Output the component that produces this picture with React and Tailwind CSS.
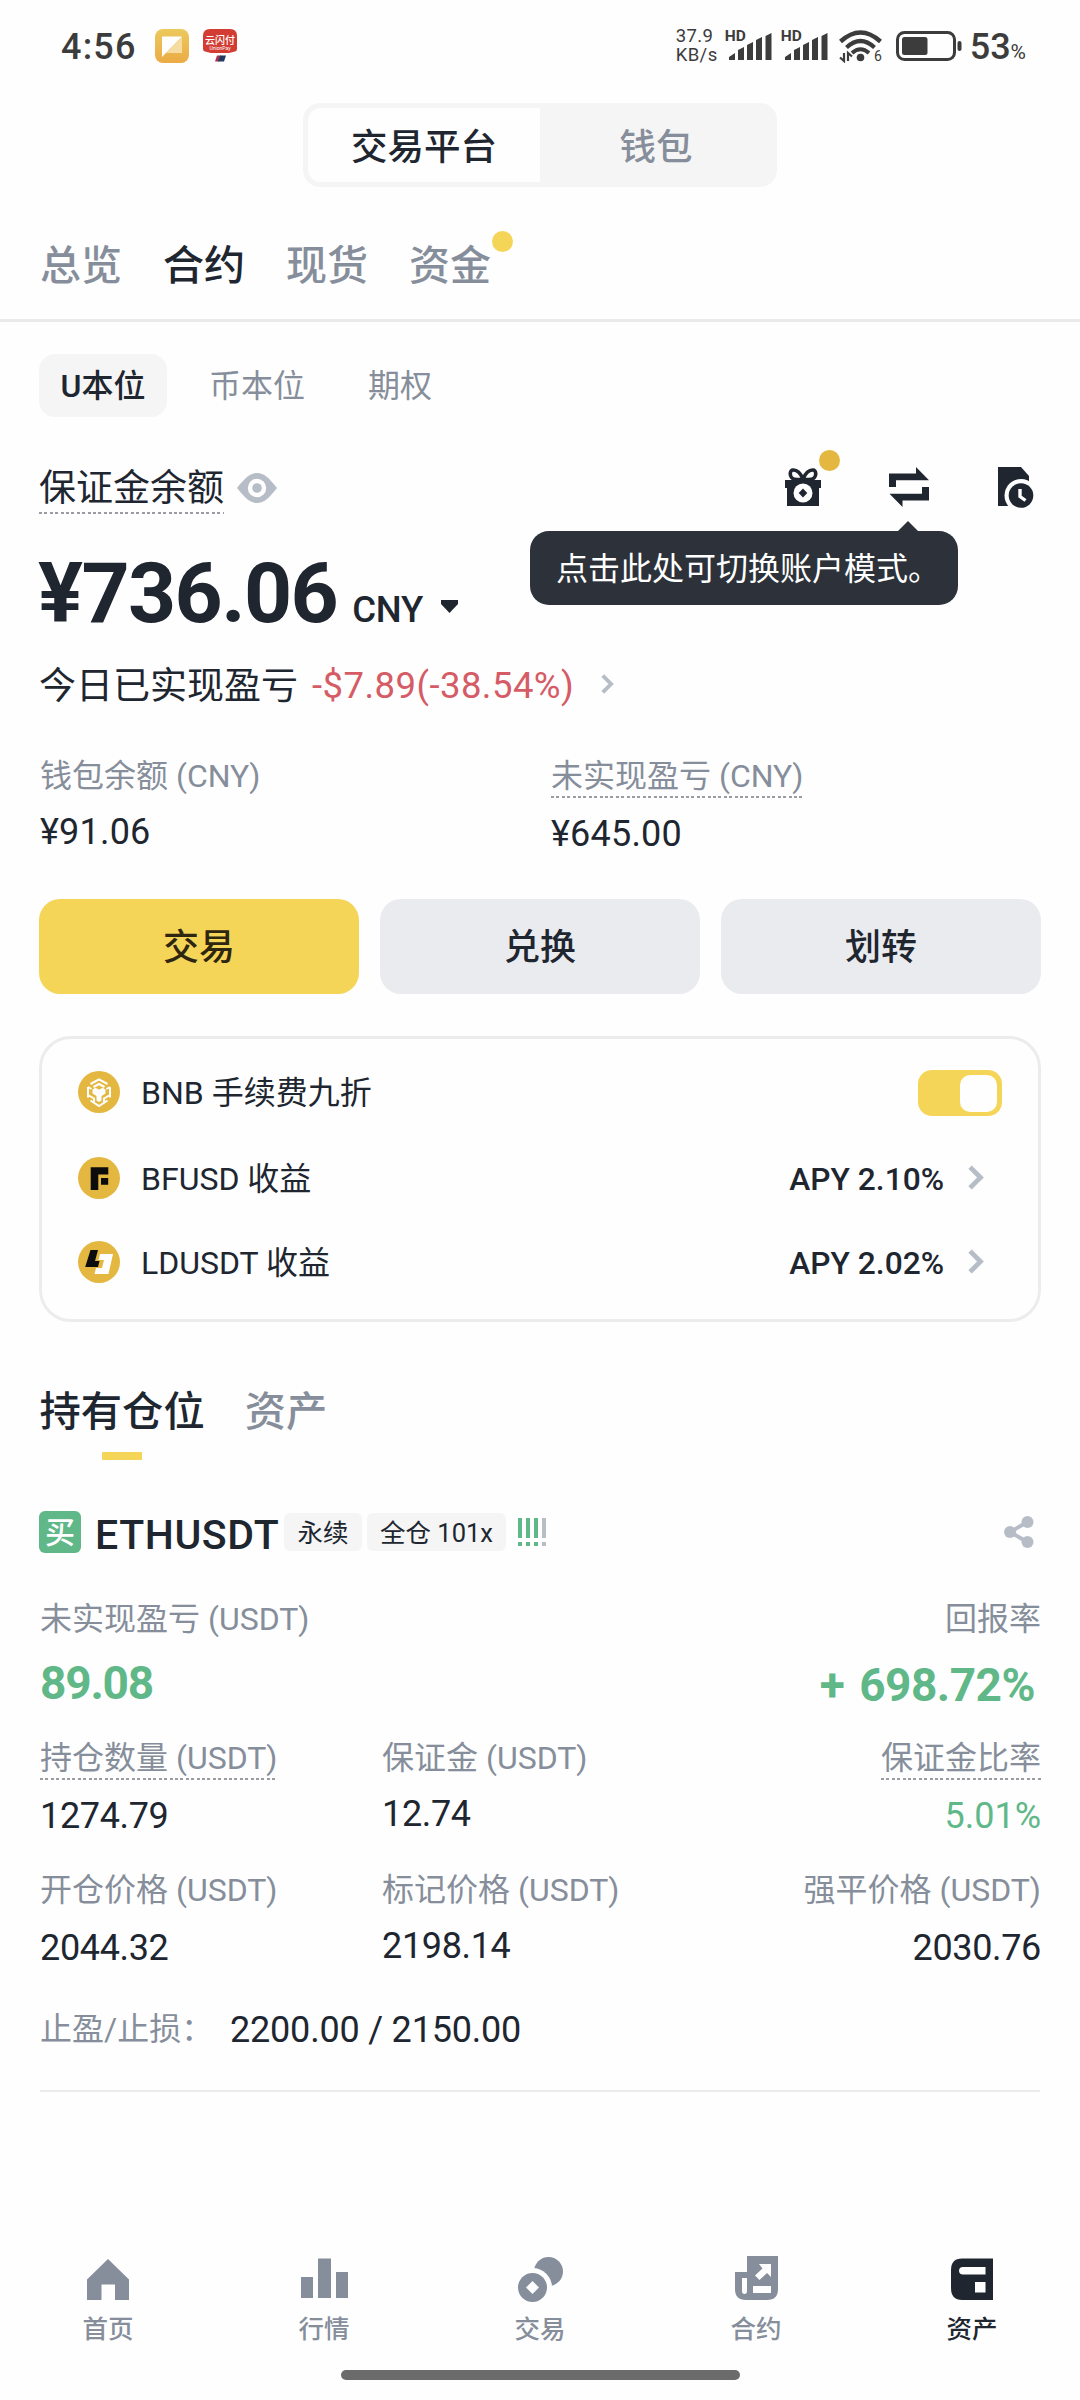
import React, { useState } from 'react';
import clsx from 'clsx';

const stats = [
  [
    { label: '持仓数量 (USDT)', value: '1274.79', dashed: true },
    { label: '保证金 (USDT)', value: '12.74' },
    { label: '保证金比率', value: '5.01%', dashed: true, green: true },
  ],
  [
    { label: '开仓价格 (USDT)', value: '2044.32' },
    { label: '标记价格 (USDT)', value: '2198.14' },
    { label: '强平价格 (USDT)', value: '2030.76' },
  ],
];

function Dashes() {
  return (
    <div className="h-[2px] w-full bg-[repeating-linear-gradient(90deg,#9a9ca1_0_3px,transparent_3px_5.4px)]" />
  );
}

function Chevron({ className }) {
  return (
    <svg className={className} viewBox="0 0 15 24" fill="none" stroke="#b7bdc6" strokeWidth="4.6">
      <path d="M1.8 2 L11.8 12 L1.8 22" />
    </svg>
  );
}

function Signal() {
  return (
    <div className="relative h-[32px] w-[48px]">
      <span className="absolute left-0 top-0 text-[15.5px] leading-[13px] font-bold">HD</span>
      <svg className="absolute left-[4px] top-[3px]" width="43" height="27" viewBox="0 0 43 27" fill="#3c3c3c">
        <path d="M0 27v-3l6-4v7zM9 27V17l6-3v13zM18 27V12l6-3v18zM27 27V7l6-3v23zM36.500 27V3l6-3v27z" />
      </svg>
    </div>
  );
}

function StatusBar() {
  return (
    <div className="flex h-[92px] items-center text-[#3c3c3c]">
      <span className="ml-[61px] w-[94px] pt-[2px] text-[36px] leading-none font-medium tracking-[1.2px]">4:56</span>
      <svg width="34" height="34" viewBox="0 0 34 34">
        <defs>
          <linearGradient id="noteBg" x1="0" y1="0" x2="0" y2="1">
            <stop offset="0" stopColor="#ecc95c" />
            <stop offset="1" stopColor="#ebab45" />
          </linearGradient>
        </defs>
        <rect width="34" height="34" rx="8" fill="url(#noteBg)" />
        <path d="M7 7.500h20L7 28z" fill="#fff" />
        <path d="M27 7.500V24H11z" fill="#f6dca0" />
      </svg>
      <svg className="ml-[14px]" width="34" height="34" viewBox="0 0 34 34">
        <path d="M7 0h20q7 0 7 7v13q0 2-2 2.500L26 24H8l-6-1.500Q0 22 0 20V7Q0 0 7 0z" fill="#d23c33" />
        <text x="17" y="14.500" fontSize="10" fontWeight="500" fill="#fff" textAnchor="middle">云闪付</text>
        <text x="17" y="20.500" fontSize="5" fill="#fff" textAnchor="middle">UnionPay</text>
        <path d="M14 26.500h4l-2 6h-4z" fill="#a8324a" />
        <path d="M17 26.500h6l-2 6h-6z" fill="#1f3a63" />
      </svg>

      <div className="ml-auto w-[45px] text-[18.500px] leading-[19px] tracking-[0.400px]">
        <div>37.9</div>
        <div>KB/s</div>
      </div>
      <div className="ml-[4px]"><Signal /></div>
      <div className="ml-[8px]"><Signal /></div>
      <svg className="ml-[10px]" width="44" height="34" viewBox="0 0 44 34" fill="none" stroke="#3c3c3c">
        <path d="M1.500 12.500Q21.500 -5.500 41.500 12.500" strokeWidth="4.400" />
        <path d="M7.500 18.500Q21.500 5.500 35.500 18.500" strokeWidth="4.200" />
        <path d="M13 24Q21.500 16.500 30 24" strokeWidth="4" />
        <circle cx="21.500" cy="28.500" r="3.800" fill="#3c3c3c" stroke="none" />
        <path d="M5 24v8L1 28.500M9 32v-8l4 3.500" strokeWidth="2.200" />
        <text x="35" y="32" fontSize="14" fill="#3c3c3c" stroke="none">6</text>
      </svg>
      <svg className="ml-[13px]" width="66" height="30" viewBox="0 0 66 30">
        <rect x="1.500" y="1.500" width="57" height="27" rx="7" fill="none" stroke="#3c3c3c" strokeWidth="3" />
        <rect x="6" y="6" width="25.500" height="18" rx="2.500" fill="#3c3c3c" />
        <rect x="61.500" y="10" width="4" height="10" rx="2" fill="#3c3c3c" />
      </svg>
      <div className="mr-[54px] ml-[8px] flex items-baseline pt-[2px] leading-none">
        <span className="text-[36px] font-medium">53</span>
        <span className="text-[21px]">%</span>
      </div>
    </div>
  );
}

function GiftIcon() {
  return (
    <svg width="36" height="38" viewBox="0 0 36 38">
      <g fill="none" stroke="#202630" strokeWidth="3.600">
        <path d="M18 11C15 4 11 1.800 8 2S4.500 7 6.500 9.500 13 12 18 11z" />
        <path d="M18 11C21 4 25 1.800 28 2S31.500 7 29.500 9.500 23 12 18 11z" />
      </g>
      <path d="M0 12h36v8h-2v18H2V20H0z" fill="#202630" />
      <circle cx="18" cy="25" r="9.500" fill="#fff" />
      <path d="M18 20.500L22.300 25 18 29.500 13.700 25z" fill="#202630" />
    </svg>
  );
}

function SwapIcon() {
  return (
    <svg width="40" height="40" viewBox="0 0 40 40" fill="#202630">
      <path d="M0 6.500h27V0l13 13.300H7V20H0z" />
      <path d="M40 33.500H13.500V40L.5 26.700H33V20h7z" />
    </svg>
  );
}

function HistoryIcon() {
  return (
    <svg className="-translate-y-px" width="36" height="41" viewBox="0 0 36 41">
      <path d="M0 0h23l8 9v30H0z" fill="#202630" />
      <circle cx="23" cy="28.500" r="16.500" fill="#fefefe" />
      <circle cx="23" cy="28.500" r="12.300" fill="#202630" />
      <path d="M22 22v7.500l5.500 4" fill="none" stroke="#fff" strokeWidth="3.400" />
    </svg>
  );
}

function BnbIcon() {
  return (
    <svg width="42" height="42" viewBox="0 0 42 42">
      <circle cx="21" cy="21" r="21" fill="#e4b740" />
      <g fill="none" stroke="#fff" strokeWidth="2">
        <path d="M12.500 13L21 8.300l8.500 4.700M32 16v10.500M29.500 29.500L21 35l-8.500-5.500M10 26.500V16" />
        <path d="M15.500 16L21 13l5.500 3M10 16l3.500 2M32 16l-3.500 2M10 24l6 3.500v3.500M32 24l-6 3.500v3.500" />
      </g>
      <path d="M14.500 18.500l3-1.700 3.500 2 3.500-2 3 1.700v4l-4 2.500v4.500L21 31l-2.500-1.500V25l-4-2.500z" fill="#fff" />
    </svg>
  );
}

function BfusdIcon() {
  return (
    <svg width="42" height="42" viewBox="0 0 42 42">
      <circle cx="21" cy="21" r="21" fill="#e4b740" />
      <path d="M12.700 10.300h17.600v7.200h-10V33h-7.600zM23 21h7.200v6.800H23z" fill="#0c0c0c" />
    </svg>
  );
}

function LdusdtIcon() {
  return (
    <svg width="42" height="42" viewBox="0 0 42 42">
      <circle cx="21" cy="21" r="21" fill="#e4b740" />
      <path d="M12.500 9H20l-3 11h4.500L20 26H7.200z" fill="#0c0c0c" />
      <path d="M22 13h13l-4.500 20H16.500L18 27h6l2-8h-5.500z" fill="#fff" />
    </svg>
  );
}

function EarnRow({ icon, text, children, className }) {
  return (
    <div className={clsx('flex items-center', className)}>
      {icon}
      <span className="ml-[21px] pt-[2px] text-[32px]">{text}</span>
      <div className="ml-auto flex items-center">{children}</div>
    </div>
  );
}

function NavItem({ label, active, children }) {
  return (
    <div className={clsx('flex w-[216px] flex-col items-center', active ? 'text-[#202630]' : 'text-[#868e9b]')}>
      <svg width="48" height="48" viewBox="0 0 48 48" fill="currentColor">{children}</svg>
      <span className="mt-[10px] h-[32px] text-[25.500px] leading-[32px] font-medium">{label}</span>
    </div>
  );
}

export default function App() {
  const [feeDiscount, setFeeDiscount] = useState(true);

  return (
    <div className="h-[2400px] w-[1080px] overflow-hidden bg-[#fefefe] font-[Roboto,'Noto_Sans_CJK_SC',sans-serif] text-[#202630]">
      <StatusBar />

      {/* Platform / wallet switch */}
      <div className="mx-auto mt-[11px] flex h-[84px] w-[474px] rounded-[17px] bg-[#f5f5f5] p-[5px] text-[36.500px] font-medium">
        <div className="flex w-[232px] items-center justify-center rounded-l-[13px] bg-[#fefefe] pt-[7px]">交易平台</div>
        <div className="flex flex-1 items-center justify-center pt-[7px] text-[#868e9b]">钱包</div>
      </div>

      {/* Account tabs */}
      <div className="flex h-[135px] gap-[41px] border-b-[3px] border-[#eaeaea] pt-[58px] pl-[40px] text-[41px] leading-[42px] font-medium text-[#868e9b]">
        <span>总览</span>
        <span className="text-[#202630]">合约</span>
        <span>现货</span>
        <span className="relative h-[42px]">
          资金
          <i className="absolute -top-[14px] left-[83px] size-[21px] rounded-full bg-[#f5d558]" />
        </span>
      </div>

      <div className="mt-[32px] ml-[39px] flex h-[63px] gap-[21px] text-[32px] leading-[65px] text-[#868e9b]">
        <span className="h-[63px] w-[128px] rounded-[16px] bg-[#f5f5f5] text-center font-medium text-[#202630]">U本位</span>
        <span className="px-[21px]">币本位</span>
        <span className="px-[21px]">期权</span>
      </div>

      {/* Margin balance */}
      <div className="mt-[46px] flex h-[51px] items-center pr-[46px] pl-[39px]">
        <div className="pt-[3px] text-[37px] leading-[46px]">
          保证金余额
          <Dashes />
        </div>
        <svg className="ml-[13px] -translate-y-px" width="40" height="30" viewBox="0 0 40 30">
          <path d="M0 15C8 5 13 0 20 0s12 5 20 15c-8 10-13 15-20 15S8 25 0 15z" fill="#b7bdc6" />
          <circle cx="20" cy="15" r="9.200" fill="#fefefe" />
          <circle cx="20" cy="15" r="4.800" fill="#b7bdc6" />
        </svg>
        <div className="relative mr-[68px] ml-auto -translate-y-[2px]">
          <GiftIcon />
          <i className="absolute -top-[18px] left-[34px] size-[21px] rounded-full bg-[#e4b740]" />
        </div>
        <div className="relative mr-[69px] -translate-y-[2px]">
          <SwapIcon />
          <div className="absolute top-[64px] -left-[359px] flex h-[74px] w-[428px] items-center rounded-[19px] bg-[#2d323a] pt-[2px] pl-[26px] text-[32px] whitespace-nowrap text-white">
            点击此处可切换账户模式。
            <svg className="absolute -top-[10px] left-[367px]" width="22" height="11" viewBox="0 0 22 11" fill="#2d323a">
              <path d="M11 0l11 11H0z" />
            </svg>
          </div>
        </div>
        <HistoryIcon />
      </div>

      <div className="mt-[40px] flex h-[80px] items-baseline pl-[38px]">
        <span className="text-[84px] leading-[80px] font-bold tracking-[-1.600px]">¥736.06</span>
        <span className="ml-[15px] text-[36.500px] font-medium tracking-[-0.200px]">CNY</span>
        <svg className="ml-[18px] -translate-y-[9px]" width="17" height="13" viewBox="0 0 17 13" fill="#202630">
          <path d="M0 0h17v4L8.500 13 0 4z" />
        </svg>
      </div>

      <div className="mt-[26px] flex h-[50px] items-center pt-[3px] pl-[39px] text-[37px]">
        今日已实现盈亏
        <span className="ml-[14px] text-[36.500px] tracking-[0.450px] text-[#d55c66]">-$7.89(-38.54%)</span>
        <Chevron className="ml-[27px] h-[20px] w-[13px] -translate-y-[3px]" />
      </div>

      <div className="mt-[46px] grid h-[98px] grid-cols-[511px_1fr] pl-[40px] text-[36px] tracking-[0.200px]">
        <div>
          <div className="h-[40px] text-[32px] leading-[40px] tracking-normal text-[#868e9b]">钱包余额 (CNY)</div>
          <div className="mt-[16px] leading-[40px]">¥91.06</div>
        </div>
        <div>
          <div className="w-max text-[32px] leading-[40px] tracking-normal text-[#868e9b]">
            未实现盈亏 (CNY)
            <Dashes />
          </div>
          <div className="mt-[16px] leading-[40px]">¥645.00</div>
        </div>
      </div>

      <div className="mt-[45px] grid h-[95px] grid-cols-3 gap-[21px] px-[39px] text-[36px] font-medium">
        <button className="rounded-[21px] bg-[#f5d558] pt-[3px] text-[#2e2610]">交易</button>
        <button className="rounded-[21px] bg-[#eaebef] pt-[3px]">兑换</button>
        <button className="rounded-[21px] bg-[#eaebef] pt-[3px]">划转</button>
      </div>

      {/* Earn card */}
      <div className="mx-[39px] mt-[42px] h-[286px] rounded-[32px] border-[3px] border-[#ececec] pt-[10px] pr-[36px] pl-[36px]">
        <EarnRow className="h-[86px]" icon={<BnbIcon />} text="BNB 手续费九折">
          <button
            onClick={() => setFeeDiscount(!feeDiscount)}
            className={clsx(
              'flex h-[46px] w-[84px] translate-y-px items-center rounded-[14px] p-[5px]',
              feeDiscount ? 'justify-end bg-[#f5d558]' : 'justify-start bg-[#eaebef]'
            )}
          >
            <span className="h-[37px] w-[37px] rounded-[10px] bg-[#fefefe]" />
          </button>
        </EarnRow>
        <EarnRow className="h-[85px]" icon={<BfusdIcon />} text="BFUSD 收益">
          <span className="pt-[4px] text-[31.700px] font-medium">APY 2.10%</span>
          <Chevron className="mr-[18px] ml-[24px] h-[25px] w-[16px]" />
        </EarnRow>
        <EarnRow className="h-[84px]" icon={<LdusdtIcon />} text="LDUSDT 收益">
          <span className="pt-[4px] text-[31.700px] font-medium">APY 2.02%</span>
          <Chevron className="mr-[18px] ml-[24px] h-[25px] w-[16px]" />
        </EarnRow>
      </div>

      {/* Positions */}
      <div className="mt-[68px] flex h-[70px] gap-[40px] pl-[39.500px] text-[41.300px] leading-[44px] font-medium">
        <div>
          持有仓位
          <div className="mx-auto mt-[18px] h-[8px] w-[40px] rounded-[1px] bg-[#f5d558]" />
        </div>
        <div className="text-[#868e9b]">资产</div>
      </div>

      <div className="mt-[51px] flex h-[42px] items-center pr-[46px] pl-[39px]">
        <span className="h-[42px] w-[42px] rounded-[6px] bg-[#60b888] text-center text-[30px] leading-[44px] font-medium text-white">买</span>
        <span className="w-[203px] pt-[8px] pl-[14px] text-[41px] font-medium tracking-[0.600px]">ETHUSDT</span>
        <span className="h-[38px] w-[78px] rounded-[6px] bg-[#f5f5f5] text-center text-[25.500px] leading-[41px]">永续</span>
        <span className="ml-[5px] h-[38px] w-[139px] rounded-[6px] bg-[#f5f5f5] text-center text-[25.500px] leading-[41px]">全仓 101x</span>
        <svg className="ml-[12px]" width="29" height="28" viewBox="0 0 29 28">
          <path d="M0 0h4v20H0zM8 0h4v20H8zM16 0h4v20h-4zM0 24h4v4H0zM8 24h4v4H8zM16 24h4v4h-4z" fill="#60b888" />
          <path d="M24 0h4v20h-4zM24 24h4v4h-4z" fill="#b9bdc4" />
        </svg>
        <svg className="ml-auto" width="30" height="32" viewBox="0 0 30 32" fill="#b7bdc6">
          <circle cx="6" cy="16" r="6" />
          <circle cx="23.500" cy="6" r="6" />
          <circle cx="23.500" cy="26" r="6" />
          <path d="M23.500 6L6 16l17.500 10" fill="none" stroke="#b7bdc6" strokeWidth="4" />
        </svg>
      </div>

      <div className="mt-[46px] flex h-[109px] justify-between pr-[39px] pl-[40px] leading-[40px]">
        <div>
          <div className="text-[32px] text-[#868e9b]">未实现盈亏 (USDT)</div>
          <div className="mt-[24px] text-[46px] font-bold tracking-[-1.200px] text-[#60b888]">89.08</div>
        </div>
        <div className="text-right">
          <div className="text-[32px] text-[#868e9b]">回报率</div>
          <div className="mt-[26px] pr-[6px] text-[46px] font-bold tracking-[-0.500px] text-[#60b888]">
            <span className="mr-[4px]">+</span> 698.72%
          </div>
        </div>
      </div>

      {stats.map((row, r) => (
        <div
          key={r}
          className={clsx('grid h-[97px] grid-cols-[342px_1fr_1fr] pr-[39px] pl-[40px] leading-[40px]', r === 0 ? 'mt-[30px]' : 'mt-[35px]')}
        >
          {row.map((s, i) => (
            <div key={s.label} className={clsx('flex flex-col', i === 2 && 'items-end')}>
              <div className="h-[42px] w-max text-[32px] text-[#868e9b]">
                {s.label}
                {s.dashed && <Dashes />}
              </div>
              <div
                className={clsx(
                  'text-[36px]',
                  i === 1 ? 'mt-[14px]' : 'mt-[16px]',
                  s.green ? 'text-[#60b888]' : 'tracking-[-0.350px]'
                )}
              >
                {s.value}
              </div>
            </div>
          ))}
        </div>
      ))}

      <div className="mt-[42px] flex h-[40px] items-center pl-[40px] text-[36px] tracking-[-0.200px]">
        <span className="w-[190px] text-[32px] tracking-normal text-[#868e9b]">止盈/止损：</span>
        <span className="pt-[2px]">2200.00 / 2150.00</span>
      </div>
      <div className="mx-[40px] mt-[41px] h-[2px] bg-[#ececec]" />

      {/* Bottom navigation */}
      <div className="mt-[163px] flex">
        <NavItem label="首页">
          <path d="M24 4l21 20.500V45H31V29.500H17.500V45H3V24.500z" />
        </NavItem>
        <NavItem label="行情">
          <path d="M1 22h12v21H1zM18 3.500h13V43H18zM36 17h12v26H36z" />
        </NavItem>
        <NavItem label="交易">
          <circle cx="32.500" cy="16.500" r="14.500" />
          <circle cx="16.500" cy="32.500" r="19.500" fill="#fefefe" />
          <circle cx="16.500" cy="32.500" r="14.500" />
          <path d="M16.500 26l6.500 6.500-6.500 6.500-6.500-6.500z" fill="#fefefe" />
        </NavItem>
        <NavItem label="合约">
          <path d="M15 1h31v33q0 11-11 11H14Q3 45 3 34V17h12z" />
          <path d="M10 23h5v13q0 3-2.500 3T10 36zM21 31h18v7H21zM27 9h12v13l-4-4-7.500 7-4.500-4.500 7.500-7z" fill="#fefefe" />
        </NavItem>
        <NavItem label="资产" active>
          <path d="M14 3.500h31V45H14Q3 45 3 33V15Q3 3.500 14 3.500z" />
          <path d="M15 12h22.500v7.500H15q-4 0-4-3.700T15 12zM27 27h10.500v10.500H27z" fill="#fefefe" />
        </NavItem>
      </div>
      <div className="mx-auto mt-[25px] h-[10px] w-[399px] rounded-full bg-[#6b6b6b]" />
    </div>
  );
}
